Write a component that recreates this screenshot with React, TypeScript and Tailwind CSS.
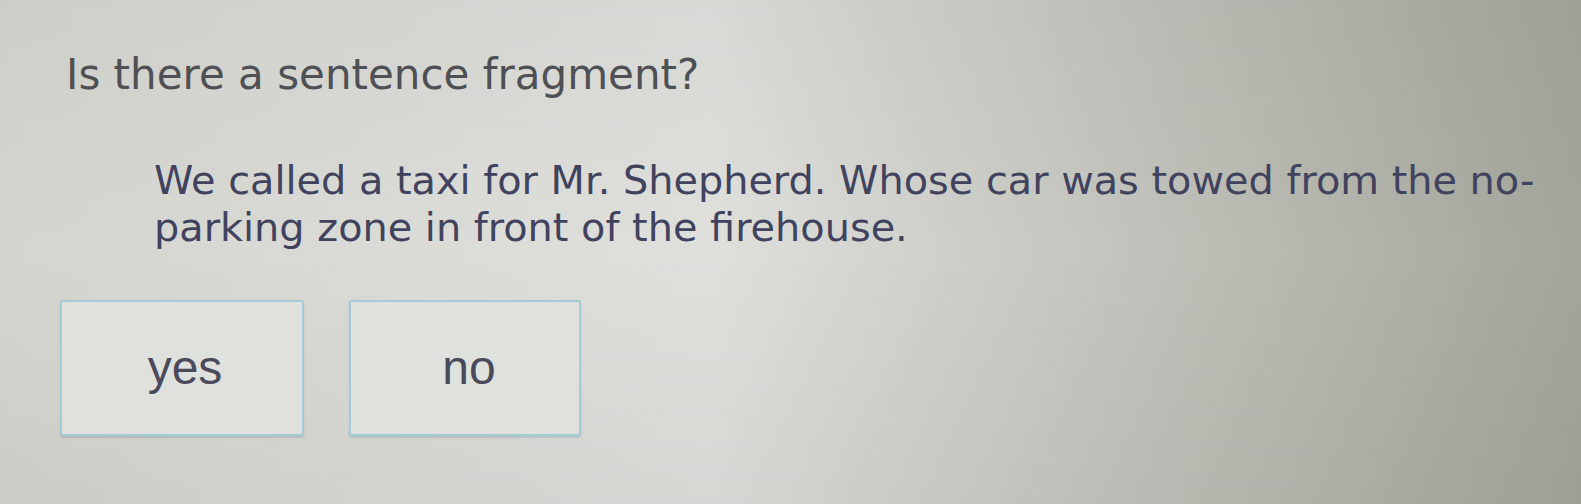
export default function App() {
  return (
    <div className="relative w-[1581px] h-[504px] overflow-hidden bg-linear-to-r from-[#d4d5cf] via-[#dfe0dc] via-45% to-[#a3a49a] font-['DejaVu_Sans',sans-serif]">
      <div className="absolute inset-0 bg-linear-to-b from-[#00000008] via-transparent to-[#0000000a]" />
      <div className="relative pl-[66px] pt-[50px]">
        <h1 className="text-[42px] leading-[50px] text-[#4f5054]">
          Is there a sentence fragment?
        </h1>
        <p className="mt-[57px] ml-[88px] w-[1420px] text-[39.8px] leading-[47px] text-[#41435e]">
          We called a taxi for Mr. Shepherd. Whose car was towed from the no-
          <br />
          parking zone in front of the firehouse.
        </p>
        <div className="mt-[49px] -ml-[6px] flex gap-[45px] font-['Liberation_Sans',sans-serif]">
          <button className="w-[244px] h-[136px] rounded-[3px] border-2 border-[#a6cbd6] bg-[#dfe1dd] shadow-[0_2px_2px_rgba(120,150,160,0.35)] text-[48px] text-[#4a4a5c] flex items-center justify-center pl-[6px]">
            yes
          </button>
          <button className="w-[232px] h-[136px] rounded-[3px] border-2 border-[#a6cbd6] bg-[#dfe1dd] shadow-[0_2px_2px_rgba(120,150,160,0.35)] text-[48px] text-[#4a4a5c] flex items-center justify-center pl-[8px]">
            no
          </button>
        </div>
      </div>
    </div>
  );
}
